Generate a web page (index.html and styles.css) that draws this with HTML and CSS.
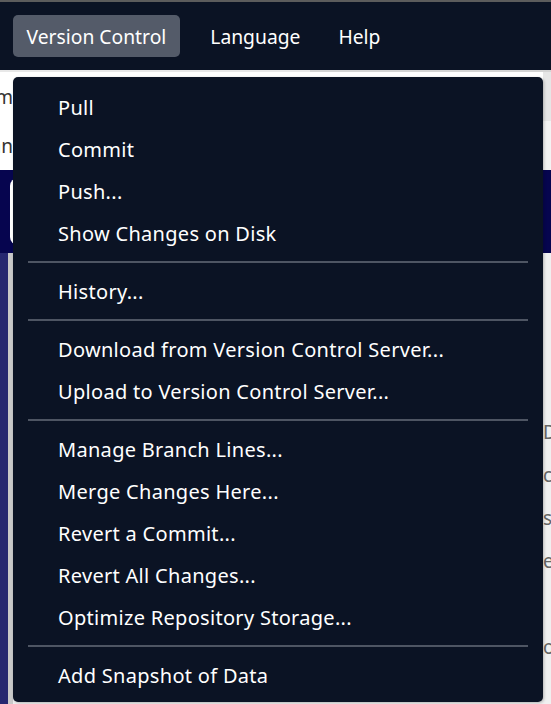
FILE: index.html
```html
<!DOCTYPE html>
<html>
<head>
<meta charset="utf-8">
<link rel="stylesheet" href="styles.css">
</head>
<body>
<div class="topline"></div>
<nav class="menubar">
  <span class="mb-item active">Version Control</span>
  <span class="mb-item lang">Language</span>
  <span class="mb-item">Help</span>
</nav>
<div class="rule"><div class="rule-l"></div><div class="rule-r"></div></div>
<main class="page">
  <div class="row row1"><div class="cut"><span>Program</span></div><div class="fill"></div><div class="side side-a"></div></div>
  <div class="row row2"><div class="cut"><span>Plan</span></div><div class="fill"></div><div class="side side-b"></div></div>
  <div class="banner"><div class="card"></div></div>
  <div class="lower">
    <div class="strip"></div>
    <div class="gutter"></div>
    <div class="lower-mid"></div>
    <div class="peek">
      <span>Do</span><span>co</span><span>se</span><span>e</span><span class="blank">&nbsp;</span><span>op</span>
    </div>
  </div>
</main>

<div class="dropdown">
  <div class="mi">Pull</div>
  <div class="mi">Commit</div>
  <div class="mi">Push...</div>
  <div class="mi">Show Changes on Disk</div>
  <div class="sep"></div>
  <div class="mi">History...</div>
  <div class="sep"></div>
  <div class="mi">Download from Version Control Server...</div>
  <div class="mi">Upload to Version Control Server...</div>
  <div class="sep"></div>
  <div class="mi">Manage Branch Lines...</div>
  <div class="mi">Merge Changes Here...</div>
  <div class="mi">Revert a Commit...</div>
  <div class="mi">Revert All Changes...</div>
  <div class="mi">Optimize Repository Storage...</div>
  <div class="sep"></div>
  <div class="mi">Add Snapshot of Data</div>
</div>
</body>
</html>
```

FILE: styles.css
```css
* { box-sizing: border-box; }
html, body { margin: 0; padding: 0; }
body {
  width: 551px;
  height: 704px;
  overflow: hidden;
  background: #f0f0f0;
  font-family: "Noto Sans", "Open Sans", sans-serif;
  position: relative;
}
.topline { height: 2px; background: #5c5c5c; }
.menubar {
  height: 68px;
  background: #0b1324;
  display: flex;
  align-items: center;
  padding-left: 13px;
}
.mb-item {
  color: #ffffff;
  font-size: 19.3px;
  height: 42px;
  display: flex;
  align-items: center;
  padding: 0 13.5px;
  margin-right: 17px;
  border-radius: 5px;
}
.mb-item.lang { margin-right: 11px; }
.mb-item.active { background: #545b69; }
.rule { display: flex; height: 2px; }
.rule-l { width: 310px; background: #e8e8e8; }
.rule-r { flex: 1; background: #d4d4d4; }
.page { display: flex; flex-direction: column; }
.row { display: flex; height: 49px; background: #ffffff; }
.cut {
  width: 13px;
  overflow: hidden;
  display: flex;
  justify-content: flex-end;
  align-items: center;
  color: #333;
  font-size: 19px;
  white-space: nowrap;
}
.fill { flex: 1; }
.side { width: 8px; }
.side-a { background: #e6e6e6; }
.side-b { background: #f4f4f4; }
.banner {
  height: 83px;
  background: #06054f;
  padding: 8px 0 8px 10px;
}
.card { height: 100%; width: 60px; background: #ffffff; border-radius: 8px 0 0 8px; }
.lower { display: flex; height: 460px; }
.strip { width: 8px; background: #262770; }
.gutter { width: 5px; background: #c9c9c9; }
.lower-mid { flex: 1; background: #f0f0f0; }
.peek {
  width: 8px;
  overflow: hidden;
  background: #f0f0f0;
  display: flex;
  flex-direction: column;
  padding-top: 158px;
  color: #666;
  font-size: 19px;
  line-height: 43px;
  white-space: nowrap;
}
.peek .blank { height: 43px; }

.dropdown {
  position: absolute;
  left: 13px;
  top: 77px;
  width: 530px;
  background: #0b1324;
  border-radius: 5px;
  padding: 9px 15px 6px 15px;
  box-shadow: 1px 1px 3px rgba(0,0,0,0.25);
}
.mi {
  height: 42px;
  display: flex;
  align-items: center;
  padding-left: 30px;
  color: #ffffff;
  font-size: 20px;
  letter-spacing: 0.3px;
  white-space: nowrap;
}
.sep { height: 2px; background: #4e5563; margin: 7px 0; }
```
